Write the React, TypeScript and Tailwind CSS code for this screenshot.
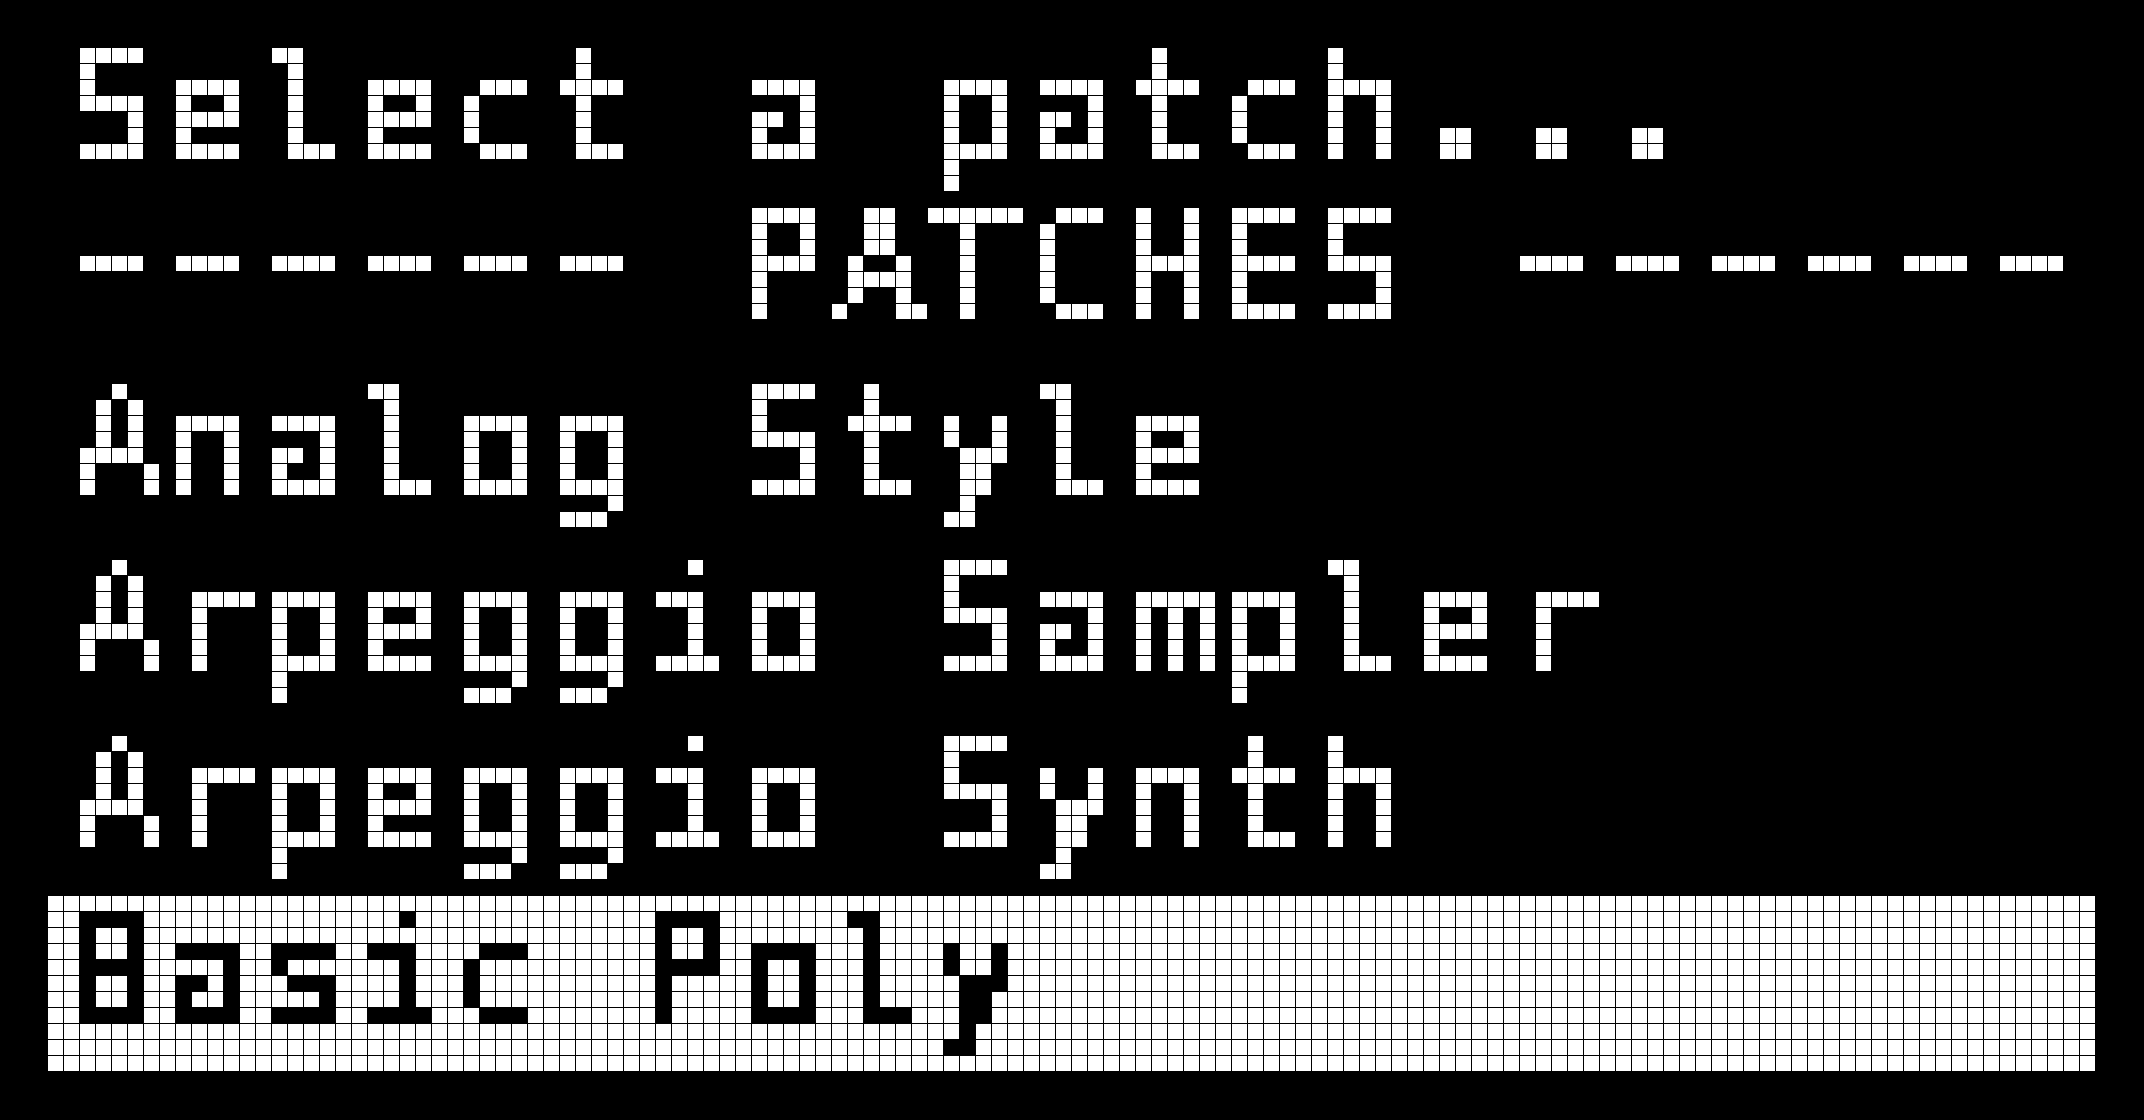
import type { ReactNode } from "react";

// OLED look: sample the centre of every 16px cell, threshold, then grow back to a 15px square
const Pixelate = ({ id, grow }: { id: string; grow: "dilate" | "erode" }) => (
  <filter id={id} x="0" y="0" width="100%" height="100%" colorInterpolationFilters="sRGB">
    <feMorphology in="SourceGraphic" operator={grow} radius={1} result="thick" />
    <feFlood x="7" y="7" width="1" height="1" floodColor="#fff" result="dot" />
    <feComposite in="dot" in2="dot" operator="over" x="0" y="0" width="16" height="16" result="cell" />
    <feTile in="cell" result="dots" />
    <feComposite in="thick" in2="dots" operator="in" result="samples" />
    <feComponentTransfer in="samples" result="bin">
      <feFuncR type="discrete" tableValues="0 1" />
      <feFuncG type="discrete" tableValues="0 1" />
      <feFuncB type="discrete" tableValues="0 1" />
      <feFuncA type="discrete" tableValues="0 1" />
    </feComponentTransfer>
    <feMorphology in="bin" operator="dilate" radius={7} />
  </filter>
);

const OledFilters = () => (
  <svg className="absolute h-0 w-0" aria-hidden="true">
    <defs>
      <Pixelate id="oled-light" grow="dilate" />
      <Pixelate id="oled-dark" grow="erode" />
      {/* long dashes, lifted onto the middle row */}
      <filter id="dash" x="0" y="0" width="100%" height="100%">
        <feMorphology in="SourceGraphic" operator="dilate" radius="13 0" result="wide" />
        <feOffset in="wide" dx="0" dy="-10" />
      </filter>
      {/* chunky 2x2 dots */}
      <filter id="dots" x="0" y="0" width="100%" height="100%">
        <feMorphology in="SourceGraphic" operator="dilate" radius={6} />
      </filter>
    </defs>
  </svg>
);

const Line = ({ children, className = "" }: { children: ReactNode; className?: string }) => (
  <div
    className={`h-[144px] w-[2048px] whitespace-pre pl-[17px] text-[152px] leading-[119px] tracking-[4.5px] text-white [filter:url(#oled-light)] ${className}`}
  >
    {children}
  </div>
);

// half-cell nudge: these glyphs land on the dot grid better a little to the right
const Nudge = ({ children }: { children: ReactNode }) => (
  <span className="inline-block translate-x-[8px]">{children}</span>
);

const App = () => {
  return (
    <div className="relative h-[1120px] w-[2144px] overflow-hidden bg-black pl-[48px] pt-[48px] [font-family:'DejaVu_Sans_Mono','Liberation_Mono',monospace]">
      <OledFilters />
      <div className="flex w-[2048px] flex-col">
        <Line>
          Select a patch<span className="inline-block [filter:url(#dots)]">...</span>
        </Line>
        <Line className="mt-[16px]">
          <span className="inline-block [filter:url(#dash)]">------</span> PATCHES{" "}
          <span className="inline-block [filter:url(#dash)]">------</span>
        </Line>
        <Line className="mt-[32px]">
          <Nudge>A</Nudge>nalog Style
        </Line>
        <Line className="mt-[32px]">
          <Nudge>A</Nudge>rpeggio Sa<Nudge>m</Nudge>pler
        </Line>
        <Line className="mt-[32px]">
          <Nudge>A</Nudge>rpeggio Synth
        </Line>

        {/* selected row */}
        <div className="mt-[16px] h-[176px] w-[2048px] bg-white pt-[16px] [filter:url(#oled-dark)]">
          <div className="h-[144px] whitespace-pre pl-[17px] text-[152px] leading-[119px] tracking-[4.5px] text-black">
            Basic Poly
          </div>
        </div>
      </div>
    </div>
  );
};

export default App;
